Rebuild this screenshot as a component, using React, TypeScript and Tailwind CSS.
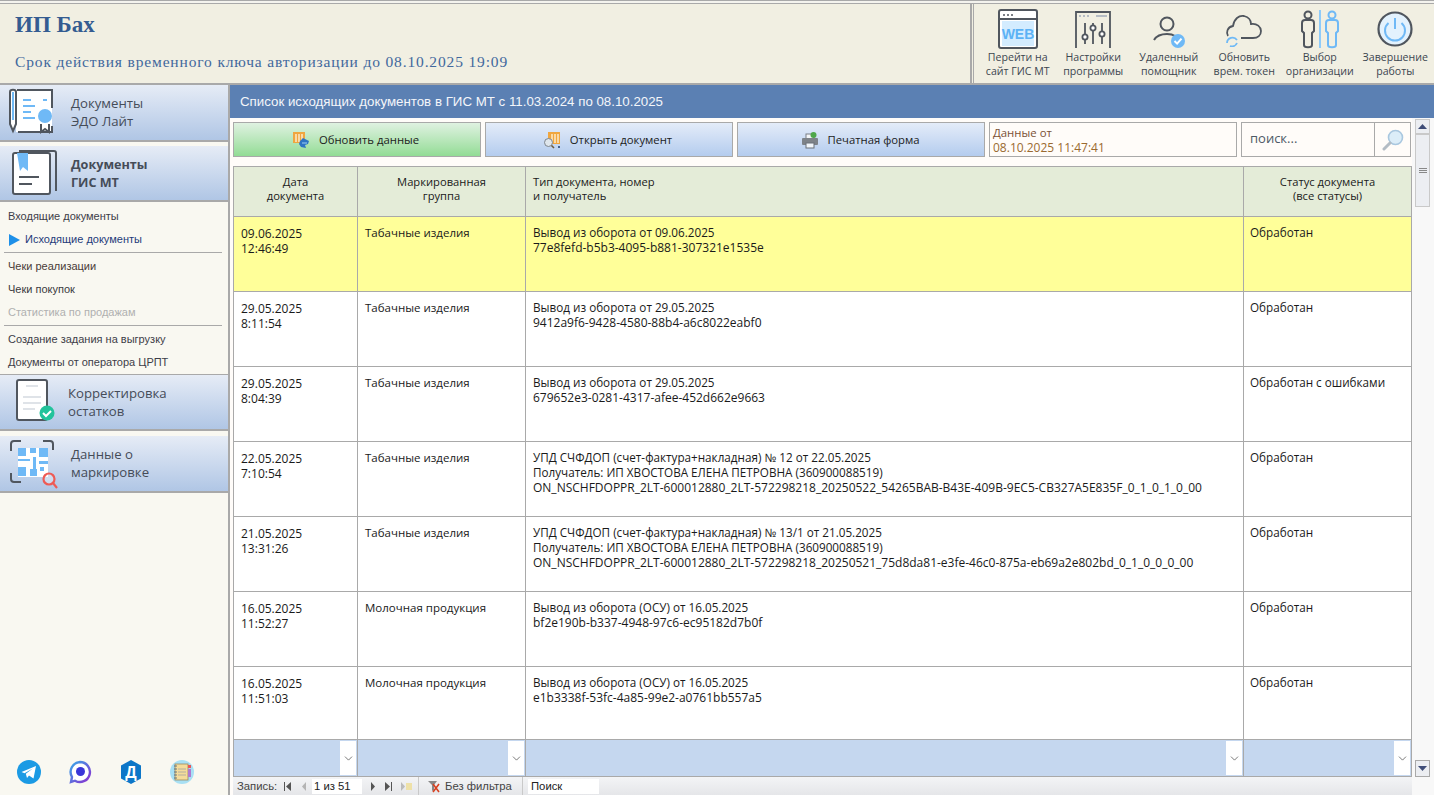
import { ReactNode } from "react";
import { ChevronDown } from "lucide-react";

const sans = "font-['Open_Sans','Noto_Sans',sans-serif]";

const rows = [
  { date: "09.06.2025", time: "12:46:49", group: "Табачные изделия", title: ["Вывод из оборота от 09.06.2025"], code: "77e8fefd-b5b3-4095-b881-307321e1535e", status: "Обработан", active: true },
  { date: "29.05.2025", time: "8:11:54", group: "Табачные изделия", title: ["Вывод из оборота от 29.05.2025"], code: "9412a9f6-9428-4580-88b4-a6c8022eabf0", status: "Обработан" },
  { date: "29.05.2025", time: "8:04:39", group: "Табачные изделия", title: ["Вывод из оборота от 29.05.2025"], code: "679652e3-0281-4317-afee-452d662e9663", status: "Обработан с ошибками" },
  { date: "22.05.2025", time: "7:10:54", group: "Табачные изделия", title: ["УПД СЧФДОП (счет-фактура+накладная) № 12 от 22.05.2025", "Получатель: ИП ХВОСТОВА ЕЛЕНА ПЕТРОВНА (360900088519)"], code: "ON_NSCHFDOPPR_2LT-600012880_2LT-572298218_20250522_54265BAB-B43E-409B-9EC5-CB327A5E835F_0_1_0_1_0_00", status: "Обработан" },
  { date: "21.05.2025", time: "13:31:26", group: "Табачные изделия", title: ["УПД СЧФДОП (счет-фактура+накладная) № 13/1 от 21.05.2025", "Получатель: ИП ХВОСТОВА ЕЛЕНА ПЕТРОВНА (360900088519)"], code: "ON_NSCHFDOPPR_2LT-600012880_2LT-572298218_20250521_75d8da81-e3fe-46c0-875a-eb69a2e802bd_0_1_0_0_0_00", status: "Обработан" },
  { date: "16.05.2025", time: "11:52:27", group: "Молочная продукция", title: ["Вывод из оборота (ОСУ) от 16.05.2025"], code: "bf2e190b-b337-4948-97c6-ec95182d7b0f", status: "Обработан" },
  { date: "16.05.2025", time: "11:51:03", group: "Молочная продукция", title: ["Вывод из оборота (ОСУ) от 16.05.2025"], code: "e1b3338f-53fc-4a85-99e2-a0761bb557a5", status: "Обработан", short: true },
];

function ToolButton({ icon, top, bottom }: { icon: ReactNode; top: string; bottom: string }) {
  return (
    <div className="w-[75.5px] shrink-0 flex flex-col items-center">
      <div className="h-[40px] flex items-end justify-center">{icon}</div>
      <div className="mt-[1px] text-[10.6px] leading-[14px] text-[#3c4650] text-center whitespace-nowrap">
        <div>{top}</div>
        <div>{bottom}</div>
      </div>
    </div>
  );
}

function NavHeader({ icon, top, bottom, bold, h, text }: { icon: ReactNode; top: string; bottom: string; bold?: boolean; h: string; text: string }) {
  return (
    <div className={`${h} flex items-center bg-gradient-to-b from-[#e6ecf6] to-[#b0c6e5] border-b-2 border-[#a9a9a9] shrink-0`}>
      <div className="w-[71px] pl-[8px] shrink-0 flex items-center">{icon}</div>
      <div className={`${text} leading-[18px] text-[#454c58] ${bold ? "text-[12.6px] font-bold" : "text-[13.2px]"}`}>
        <div>{top}</div>
        <div>{bottom}</div>
      </div>
    </div>
  );
}

function MenuItem({ text, tone = "text-[#3d3d48]" }: { text: string; tone?: string }) {
  return <div className={`h-[23px] pl-[8px] flex items-center text-[11px] font-['Liberation_Sans',sans-serif] ${tone}`}>{text}</div>;
}

function Cell({ w, children, center, last, pt = "pt-[9px]" }: { w: string; children: ReactNode; center?: boolean; last?: boolean; pt?: string }) {
  return (
    <div className={`${w} ${pt} shrink-0 ${last ? "" : "border-r border-[#a9a9a9]"} ${center ? "text-center px-[2px]" : "pl-[7px]"} overflow-hidden whitespace-nowrap`}>
      {children}
    </div>
  );
}

function FilterCell({ w, last }: { w: string; last?: boolean }) {
  return (
    <div className={`${w} shrink-0 h-full flex justify-end items-stretch bg-[#c5d7ef] ${last ? "" : "border-r border-[#a9a9a9]"}`}>
      <div className="w-[16px] my-[1px] mr-[1px] bg-white flex items-center justify-center">
        <ChevronDown size={13} strokeWidth={1.2} className="text-[#333]" />
      </div>
    </div>
  );
}

function ActionButton({ icon, label, green, w }: { icon: ReactNode; label: string; green?: boolean; w: string }) {
  return (
    <div className={`${w} h-[35px] shrink-0 flex items-center justify-center border border-[#a9a9a9] bg-gradient-to-b ${green ? "from-[#dff1e1] to-[#92dc95]" : "from-[#e4ecf9] to-[#b4ccee]"}`}>
      <div className="flex items-center gap-[9px] text-[11.3px] text-[#1c1c1c] pt-[1px] pr-[2px]">
        {icon}
        <span>{label}</span>
      </div>
    </div>
  );
}

export default function App() {
  return (
    <div className={`w-[1434px] h-[795px] overflow-hidden flex flex-col bg-[#fffcf9] ${sans}`}>
      <div className="h-[4px] shrink-0 border-t border-b border-[#a9a9a9] bg-[#f4f3ee]" />

      {/* шапка */}
      <div className="h-[81px] shrink-0 flex bg-[#f1efe2] border-b-2 border-[#a9a9a9]">
        <div className="flex-1 pl-[15px]">
          <div className="mt-[7px] h-[28px] text-[23px] leading-[28px] font-bold text-[#345c91] font-['Liberation_Serif',serif]">ИП Бах</div>
          <div className="mt-[13px] text-[15.5px] leading-[20px] tracking-[0.85px] text-[#41689d] font-['Liberation_Serif',serif]">
            Срок действия временного ключа авторизации до 08.10.2025 19:09
          </div>
        </div>
        <div className="w-[464px] shrink-0 border-l-2 border-[#a9a9a9]">
          <div className="h-full ml-[1px] border-l border-[#a9a9a9] pl-[6px] flex pt-[5px]">
            <ToolButton top="Перейти на" bottom="сайт ГИС МТ" icon={
              <svg width="40" height="40" viewBox="0 0 40 40" fill="none">
                <rect x="1" y="1" width="38" height="38" rx="2" fill="#fff" stroke="#50565e" strokeWidth="2" />
                <path d="M1 10h38" stroke="#50565e" strokeWidth="2" />
                <rect x="4" y="12" width="32" height="25" fill="#d3ecff" />
                <path d="M5 6h2M9 6h2M13 6h2" stroke="#50565e" strokeWidth="1.5" />
                <text x="20" y="30" textAnchor="middle" fontSize="14" fontWeight="700" fill="#5cb2f5" fontFamily="Liberation Sans">WEB</text>
              </svg>
            } />
            <ToolButton top="Настройки" bottom="программы" icon={
              <svg width="36" height="37" viewBox="0 0 36 37" fill="none" stroke="#50565e" strokeWidth="1.8" className="mb-[1px]">
                <path d="M1 37V1h34v36" />
                <path d="M4 5h2M8 5h2M12 5h2M21 5h11" stroke="#b5bcc4" strokeWidth="2" />
                <path d="M10 12v21M18 12v21M27 12v21" />
                <circle cx="10" cy="26" r="2.6" fill="#fff" />
                <circle cx="18" cy="17" r="2.6" fill="#fff" />
                <circle cx="27" cy="23" r="2.6" fill="#fff" />
              </svg>
            } />
            <ToolButton top="Удаленный" bottom="помощник" icon={
              <svg width="34" height="34" viewBox="0 0 34 34" fill="none">
                <circle cx="15" cy="9" r="6.5" stroke="#50565e" strokeWidth="2" />
                <path d="M2 25c3-5 8-6 13-6 3 0 6 .6 8 2" stroke="#50565e" strokeWidth="2" />
                <circle cx="26" cy="26" r="7" fill="#6fb9f6" />
                <path d="M22.5 26l2.6 2.6 4.4-5" stroke="#fff" strokeWidth="2" />
              </svg>
            } />
            <ToolButton top="Обновить" bottom="врем. токен" icon={
              <svg width="38" height="34" viewBox="0 0 38 34" fill="none" className="mb-[2px]">
                <path d="M3 23c-2-3-1-9 5-10 1-7 6-11 11-10 4 1 7 4 7 8 6-1 10 3 10 7 0 4-3 7-8 7H16" stroke="#50565e" strokeWidth="1.8" />
                <path d="M2 30a5.5 5.5 0 0 1 10-3M12 30a5.5 5.5 0 0 1-7 3" stroke="#6fb9f6" strokeWidth="1.8" />
              </svg>
            } />
            <ToolButton top="Выбор" bottom="организации" icon={
              <svg width="42" height="40" viewBox="0 0 42 40" fill="none" strokeWidth="2">
                <circle cx="9" cy="6" r="3.5" stroke="#50565e" />
                <path d="M3 22v-8c0-2 1-3 3-3h6c2 0 3 1 3 3v8l-2 2v12c0 3-8 3-8 0V24z" stroke="#50565e" />
                <path d="M21 1v38" stroke="#8ecbfa" />
                <circle cx="33" cy="6" r="3.5" stroke="#6fb9f6" />
                <path d="M27 22v-8c0-2 1-3 3-3h6c2 0 3 1 3 3v8l-2 2v12c0 3-8 3-8 0V24z" stroke="#6fb9f6" />
              </svg>
            } />
            <ToolButton top="Завершение" bottom="работы" icon={
              <svg width="36" height="36" viewBox="0 0 36 36" fill="none" className="mb-[2px]">
                <circle cx="18" cy="18" r="16.5" fill="#e3f2fd" stroke="#50565e" strokeWidth="2.2" />
                <path d="M11.5 12a10 10 0 1 0 13 0" stroke="#6fb9f6" strokeWidth="2" />
                <path d="M18 7v11" stroke="#6fb9f6" strokeWidth="2" />
              </svg>
            } />
          </div>
        </div>
      </div>

      <div className="flex-1 min-h-0 flex">
        {/* левое меню */}
        <div className="w-[230px] shrink-0 bg-[#f9f8f1] border-r-2 border-[#a9a9a9] flex flex-col">
          <NavHeader h="h-[57px]" text="pb-[2px]" top="Документы" bottom="ЭДО Лайт" icon={
            <svg width="46" height="46" viewBox="0 0 46 46" fill="none" className="-mt-[4px]">
              <rect x="8" y="1" width="36" height="43" fill="#fff" />
              <path d="M9 2h35v18M44 38v6H10" stroke="#50565e" strokeWidth="2" />
              <path d="M2 4c0-3 6-3 6 0v32l-3 7-3-7z" fill="#fff" stroke="#50565e" strokeWidth="2" />
              <path d="M5 4v28" stroke="#6fb9f6" strokeWidth="2" />
              <path d="M15 12h8M35 12h4M15 18h12M15 24h8M15 30h12" stroke="#6fb9f6" strokeWidth="1.8" />
              <circle cx="37" cy="28" r="7" fill="#6fb9f6" />
              <path d="M33 36v8l4-3 4 3v-8" stroke="#50565e" strokeWidth="2" />
            </svg>
          } />
          <div className="h-[4px] shrink-0" />
          <NavHeader h="h-[56px]" text="pt-[2px]" bold top="Документы" bottom="ГИС МТ" icon={
            <svg width="46" height="46" viewBox="0 0 46 46" fill="none" className="ml-[3px]">
              <rect x="2" y="3" width="37" height="41" rx="2" fill="#fff" stroke="#50565e" strokeWidth="2" />
              <path d="M8 1h35c1 0 2 1 2 2v38" stroke="#50565e" strokeWidth="2" />
              <path d="M6 3h11v18l-5-4-3 4z" fill="#6fb9f6" />
              <path d="M8 27h20M8 34h13" stroke="#50565e" strokeWidth="2.2" />
            </svg>
          } />
          <div className="pt-[3px]">
            <MenuItem text="Входящие документы" />
            <div className="h-[23px] pl-[9px] flex items-center gap-[5px] text-[11px] font-['Liberation_Sans',sans-serif] text-[#1f3b7a]">
              <svg width="11" height="12" viewBox="0 0 11 12"><path d="M0 0l11 6-11 6z" fill="#1e90e8" /></svg>
              Исходящие документы
            </div>
            <div className="h-[1px] mx-[4px] mt-[1px] mb-[2px] w-[218px] bg-[#a9a9a9]" />
            <MenuItem text="Чеки реализации" tone="text-[#4a3c38]" />
            <MenuItem text="Чеки покупок" tone="text-[#3a3a40]" />
            <MenuItem text="Статистика по продажам" tone="text-[#b0b0b0]" />
            <div className="h-[1px] mx-[4px] mt-[1px] mb-[2px] w-[218px] bg-[#a9a9a9]" />
            <MenuItem text="Создание задания на выгрузку" />
            <MenuItem text="Документы от оператора ЦРПТ" />
          </div>
          <div className="h-[1px] bg-[#a9a9a9] shrink-0" />
          <NavHeader h="h-[56px]" text="-ml-[3px]" top="Корректировка" bottom="остатков" icon={
            <svg width="46" height="46" viewBox="0 0 46 46" fill="none" className="ml-[8px]">
              <rect x="1" y="1" width="30" height="40" rx="2" fill="#fff" stroke="#50565e" strokeWidth="2" />
              <path d="M10 7h12M7 18h18M7 24h18M7 30h12" stroke="#dfe3e8" strokeWidth="2" />
              <circle cx="31" cy="34" r="7.5" fill="#22c39b" />
              <path d="M27 34l3 3 5-5" stroke="#fff" strokeWidth="2" />
            </svg>
          } />
          <div className="h-[5px] shrink-0" />
          <NavHeader h="h-[57px]" text="pb-[2px]" top="Данные о" bottom="маркировке" icon={
            <svg width="50" height="50" viewBox="0 0 50 50" fill="none" className="ml-[1px]">
              <path d="M2 12V5c0-2 1-3 3-3h7M34 2h7c2 0 3 1 3 3v6M2 34v6c0 2 1 3 3 3h7" stroke="#50565e" strokeWidth="2" />
              <rect x="9" y="9" width="30" height="29" fill="#fff" />
              <path d="M9 9h8v8H9zM30 9h9v9h-9zM9 28h8v9H9zM21 9h6v5h-6zM9 20h12v2H9zM24 18h3v14h-3zM30 22h9v3h-9zM21 30h7v7h-7zM31 28h4v4h-4z" fill="#6fb9f6" />
              <circle cx="40" cy="40" r="5.5" fill="#fff" fillOpacity="0.3" stroke="#ee5b55" strokeWidth="2.2" />
              <path d="M44 44l4 5" stroke="#ee5b55" strokeWidth="2.2" />
            </svg>
          } />
          <div className="mt-auto mb-[11px] ml-[17px] flex items-center gap-[27px]">
            <svg width="24" height="24" viewBox="0 0 24 24"><circle cx="12" cy="12" r="12" fill="#1b9ae4" /><path d="M4.5 12L19 6l-2.5 12.5-4.5-3-2 2.500-1.200-4.200 7-5.300-8.300 4.700z" fill="#fff" /></svg>
            <svg width="24" height="24" viewBox="0 0 24 24" fill="none"><defs><linearGradient id="mx" x1="0" y1="0" x2="1" y2="1"><stop offset="0" stopColor="#38a8e8" /><stop offset="1" stopColor="#8a2fd0" /></linearGradient></defs><path d="M12 2a10 10 0 1 1-5 18.700L3 22l1-5A10 10 0 0 1 12 2z" fill="#fff" stroke="url(#mx)" strokeWidth="2.4" /><circle cx="12.500" cy="11.500" r="4.500" fill="#3a36d8" /></svg>
            <svg width="24" height="24" viewBox="0 0 24 24"><path d="M12 0l10 5.500v13L12 24 2 18.500v-13z" fill="#0d76c8" /><text x="12" y="18" textAnchor="middle" fontSize="16" fontWeight="700" fill="#fff" fontFamily="Liberation Sans">Д</text></svg>
            <svg width="24" height="24" viewBox="0 0 24 24"><circle cx="12" cy="12" r="12" fill="#a8e0f4" /><rect x="5" y="4" width="13" height="16" fill="#f5dc9a" stroke="#9a8a60" strokeWidth="0.8" /><path d="M8 9h8M8 12h8M8 15h8" stroke="#a2a2a2" strokeWidth="0.8" /><path d="M4 6h3M4 9h3M4 12h3M4 15h3M4 18h3" stroke="#5a6a7a" strokeWidth="0.9" /><path d="M18 5h3v3h-3z" fill="#e55" /><path d="M18 9h3v8h-3z" fill="#b07ad0" /></svg>
          </div>
        </div>

        {/* основная область */}
        <div className="flex-1 min-w-0 flex flex-col">
          <div className="h-[33px] shrink-0 bg-[#5b80b3] pl-[10px] flex items-center text-[13.3px] text-[#f4f6fa] font-['Liberation_Sans',sans-serif]">
            Список исходящих документов в ГИС МТ с 11.03.2024 по 08.10.2025
          </div>
          <div className="flex-1 min-h-0 flex">
            <div className="w-[1182px] shrink-0 pl-[3px] flex flex-col">
              <div className="mt-[4px] flex h-[35px] text-[11px]">
                <ActionButton w="w-[248px]" green label="Обновить данные" icon={
                  <svg width="17" height="17" viewBox="0 0 17 17">
                    <rect x="0" y="0" width="12" height="11" fill="#f0a63f" />
                    <path d="M3 2v8M6 2v8M9 2v8" stroke="#fff5dd" strokeWidth="1.3" />
                    <path d="M7 9l3-3 2 1 4 2-1 3-3 1 1 3-5-1-2-3z" fill="#2f74c4" />
                    <path d="M9 11h5" stroke="#9fd0f5" />
                  </svg>
                } />
                <div className="w-[4px]" />
                <ActionButton w="w-[248px]" label="Открыть документ" icon={
                  <svg width="17" height="17" viewBox="0 0 17 17">
                    <rect x="4" y="0" width="12" height="12" fill="#f0a63f" />
                    <path d="M8 2v9M11 2v9M14 2v9" stroke="#fff5dd" strokeWidth="1.3" />
                    <circle cx="4.500" cy="10.500" r="4" fill="#dfe6ec" stroke="#7d858c" />
                    <path d="M7.500 13.500l2.500 2.500" stroke="#6e5a3c" strokeWidth="1.600" />
                    <rect x="14" y="14" width="2" height="2" fill="#46608a" />
                  </svg>
                } />
                <div className="w-[4px]" />
                <ActionButton w="w-[248px]" label="Печатная форма" icon={
                  <svg width="18" height="17" viewBox="0 0 18 17">
                    <rect x="5" y="2" width="8" height="6" fill="#f2f4f6" stroke="#7b7f85" />
                    <rect x="1" y="6" width="16" height="7" rx="1" fill="#7e8389" />
                    <rect x="5" y="11" width="8" height="5" fill="#f2f6fa" stroke="#6a7078" />
                    <circle cx="12.500" cy="3" r="3" fill="#4fa84a" />
                  </svg>
                } />
                <div className="w-[4px]" />
                <div className="w-[248px] h-[35px] border border-[#a9a9a9] pl-[3px] leading-[15px] pt-[2px] text-[#7b5135]">
                  <div className="text-[11.4px]">Данные от</div>
                  <div className="text-[12px] text-[#9a6a30]">08.10.2025 11:47:41</div>
                </div>
                <div className="w-[4px]" />
                <div className="w-[170px] h-[35px] border border-[#a9a9a9] flex">
                  <div className="flex-1 pl-[8px] pb-[2px] flex items-center text-[13px] text-[#4e5a66]">поиск...</div>
                  <div className="w-[36px] border-l border-[#a9a9a9] flex items-center justify-center">
                    <svg width="22" height="22" viewBox="0 0 22 22" fill="none">
                      <circle cx="13.500" cy="8.500" r="7" fill="#dcedf8" stroke="#a9c7df" strokeWidth="1.600" />
                      <path d="M8 14l-6 6" stroke="#b3bcc4" strokeWidth="3" strokeLinecap="round" />
                    </svg>
                  </div>
                </div>
              </div>

              <div className="mt-[9px] w-[1179px] border-l border-r border-t border-[#a9a9a9] flex-1 min-h-0 flex flex-col text-[12px] leading-[15px] text-[#1a1a1a]">
                <div className="h-[50px] shrink-0 flex bg-[#e4ecd8] border-b border-[#a9a9a9] text-[11.2px] leading-[14px]">
                  <Cell pt="pt-[8px]" w="w-[124px]" center><div>Дата</div><div>документа</div></Cell>
                  <Cell pt="pt-[8px]" w="w-[168px]" center><div>Маркированная</div><div>группа</div></Cell>
                  <Cell pt="pt-[8px]" w="w-[718px]"><div>Тип документа, номер</div><div>и получатель</div></Cell>
                  <Cell pt="pt-[8px]" w="w-[167px]" center last><div>Статус документа</div><div>(все статусы)</div></Cell>
                </div>
                {rows.map((row) => (
                  <div key={row.date + row.time} className={`${row.short ? "h-[73px]" : "h-[75px]"} shrink-0 flex border-b border-[#a9a9a9] ${row.active ? "bg-[#ffff99]" : "bg-white"}`}>
                    <Cell w="w-[124px]"><div>{row.date}</div><div>{row.time}</div></Cell>
                    <Cell w="w-[168px]"><div className="-mt-px text-[11.5px]">{row.group}</div></Cell>
                    <Cell pt="pt-[8px]" w="w-[718px]">
                      {row.title.map((l) => <div key={l} className="text-[11.7px]">{l}</div>)}
                      <div>{row.code}</div>
                    </Cell>
                    <Cell pt="pt-[8px]" w="w-[167px]" last><div className="-ml-px text-[11.7px]">{row.status}</div></Cell>
                  </div>
                ))}
                <div className="h-[37px] shrink-0 flex border-b border-[#a9a9a9]">
                  <FilterCell w="w-[124px]" />
                  <FilterCell w="w-[168px]" />
                  <FilterCell w="w-[718px]" />
                  <FilterCell w="w-[167px]" last />
                </div>
                <div className="h-[18px] shrink-0 -ml-px -mr-[3px] flex items-center bg-gradient-to-b from-[#f3f4f6] to-[#e5e6e9] border-r border-[#a9a9a9] text-[11.3px] text-[#444] font-['Liberation_Sans',sans-serif]">
                  <span className="pl-[4px] w-[49px] pt-[1px]">Запись:</span>
                  <svg width="24" height="9" viewBox="0 0 24 9">
                    <path d="M2 0h1v9H2zM9 0v9L4 4.500z" fill="#555" />
                    <path d="M24 0v9l-4-4.500z" fill="#b4b4b4" />
                  </svg>
                  <div className="w-[50px] h-[15px] ml-[6px] bg-white flex items-center pl-[2px] pt-[1px] text-[#222]">1 из 51</div>
                  <svg width="50" height="9" viewBox="0 0 50 9" className="ml-[8px]">
                    <path d="M1 0l4 4.500L1 9zM15 0l5 4.500-5 4.500zM21 0h1v9h-1z" fill="#555" />
                    <path d="M31 0l4 4.500-4 4.500z" fill="#bbb" />
                    <rect x="36" y="1" width="6" height="7" fill="#eee1a8" />
                  </svg>
                  <div className="-ml-[2px] h-full w-[105px] border-l border-r border-[#c9c9c9] flex items-center pl-[8px] pt-[1px] gap-[4px]">
                    <svg width="14" height="13" viewBox="0 0 14 13"><path d="M1 1h9L7 5v5L5 11V5z" fill="#888" /><path d="M6 4l6 8M12 4l-6 8" stroke="#d8401f" strokeWidth="1.600" /></svg>
                    Без фильтра
                  </div>
                  <div className="ml-[5px] w-[71px] h-[15px] bg-white flex items-center pl-[3px] pt-[1px] text-[#222]">Поиск</div>
                </div>
              </div>
            </div>

            {/* полоса прокрутки */}
            <div className="flex-1 flex flex-col items-center bg-[#f8f8f8] pr-[1px] pt-[1px] pb-[18px]">
              <div className="h-[15px] w-[15px] bg-[#eceef2] border border-[#c9c9c9] flex items-center justify-center">
                <svg width="9" height="5" viewBox="0 0 9 5"><path d="M0 5l4.500-5L9 5z" fill="#3f4d78" /></svg>
              </div>
              <div className="h-[73px] w-[15px] bg-[#eceef2] border border-[#c9c9c9] flex flex-col items-center justify-center gap-[1px]">
                <div className="w-[8px] h-[1px] bg-[#888]" />
                <div className="w-[8px] h-[1px] bg-[#888]" />
                <div className="w-[8px] h-[1px] bg-[#888]" />
              </div>
              <div className="flex-1" />
              <div className="h-[17px] w-[15px] bg-[#eceef2] border border-[#a9a9a9] flex items-center justify-center">
                <svg width="9" height="5" viewBox="0 0 9 5"><path d="M0 0l4.500 5L9 0z" fill="#3f4d78" /></svg>
              </div>
            </div>
          </div>
        </div>
      </div>
    </div>
  );
}
